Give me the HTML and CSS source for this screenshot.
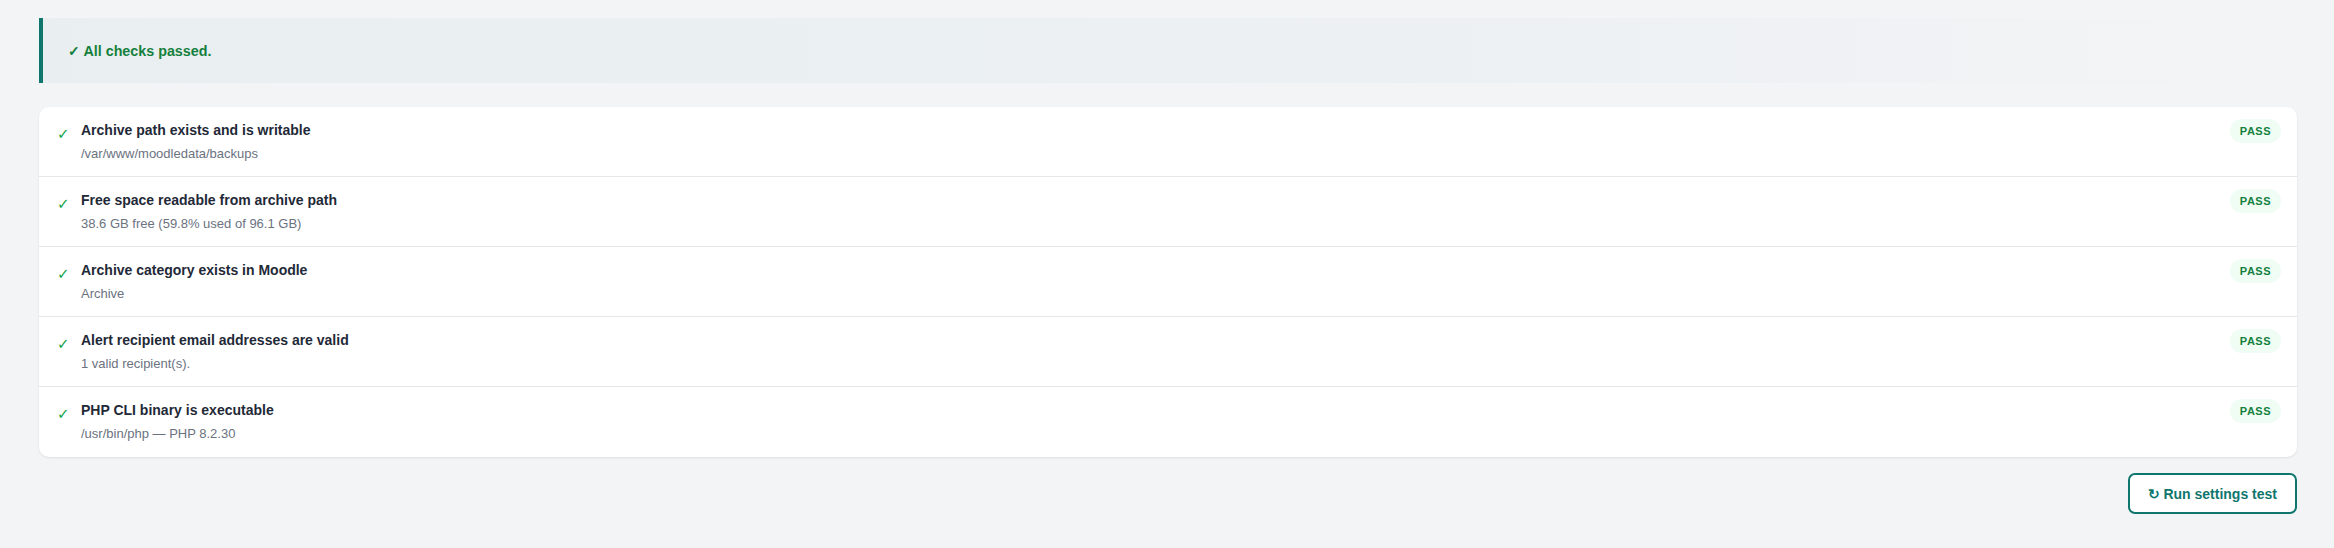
FILE: index.html
```html
<!DOCTYPE html>
<html>
<head>
<meta charset="utf-8">
<link rel="stylesheet" href="styles.css">
</head>
<body>
<div class="page">
  <div class="alert">✓ All checks passed.</div>
  <div class="card">
    <div class="row">
      <span class="tick">✓</span>
      <div class="info">
        <div class="title">Archive path exists and is writable</div>
        <div class="detail">/var/www/moodledata/backups</div>
      </div>
      <span class="badge">PASS</span>
    </div>
    <div class="row">
      <span class="tick">✓</span>
      <div class="info">
        <div class="title">Free space readable from archive path</div>
        <div class="detail">38.6 GB free (59.8% used of 96.1 GB)</div>
      </div>
      <span class="badge">PASS</span>
    </div>
    <div class="row">
      <span class="tick">✓</span>
      <div class="info">
        <div class="title">Archive category exists in Moodle</div>
        <div class="detail">Archive</div>
      </div>
      <span class="badge">PASS</span>
    </div>
    <div class="row">
      <span class="tick">✓</span>
      <div class="info">
        <div class="title">Alert recipient email addresses are valid</div>
        <div class="detail">1 valid recipient(s).</div>
      </div>
      <span class="badge">PASS</span>
    </div>
    <div class="row">
      <span class="tick">✓</span>
      <div class="info">
        <div class="title">PHP CLI binary is executable</div>
        <div class="detail">/usr/bin/php — PHP 8.2.30</div>
      </div>
      <span class="badge">PASS</span>
    </div>
  </div>
  <div class="actions">
    <button class="btn">↻ Run settings test</button>
  </div>
</div>
</body>
</html>
```
FILE: styles.css
```css
html, body {
  margin: 0;
  padding: 0;
  background: #f3f4f6;
  font-family: "Liberation Sans", Arial, sans-serif;
}
.page {
  padding: 18px 37px 20px 39px;
}
.alert {
  height: 65px;
  box-sizing: border-box;
  display: flex;
  align-items: center;
  padding: 0 25px;
  border-left: 4px solid #0f766e;
  background: linear-gradient(90deg, #e9eff0 0%, #ecf0f2 60%, rgba(243,244,246,0) 100%);
  color: #15803d;
  font-weight: 700;
  font-size: 14.3px;
}
.card {
  margin-top: 24px;
  background: #fff;
  border-radius: 10px;
  box-shadow: 0 1px 3px rgba(0,0,0,0.06), 0 1px 2px rgba(0,0,0,0.03);
  overflow: hidden;
}
.row {
  display: flex;
  align-items: flex-start;
  padding: 13px 16px 0 18px;
  height: 70px;
  box-sizing: border-box;
  border-bottom: 1px solid #e5e7eb;
}
.row:last-child {
  border-bottom: none;
}
.tick {
  width: 12px;
  margin-right: 12px;
  margin-top: 4px;
  color: #16a34a;
  font-family: "DejaVu Sans", sans-serif;
  font-size: 15px;
  line-height: 20px;
}
.info {
  flex: 1;
}
.title {
  font-size: 14px;
  font-weight: 700;
  color: #1f2937;
  line-height: 20px;
}
.detail {
  margin-top: 5px;
  font-size: 13px;
  color: #6b7280;
  line-height: 18px;
}
.badge {
  margin-top: -1px;
  height: 24px;
  line-height: 24px;
  padding: 0 10px;
  border-radius: 12px;
  background: #f0fdf4;
  color: #15803d;
  font-weight: 700;
  font-size: 11px;
  letter-spacing: 0.5px;
}
.actions {
  display: flex;
  justify-content: flex-end;
  margin-top: 16px;
}
.btn {
  height: 41px;
  padding: 0 18px;
  border: 2px solid #0f766e;
  border-radius: 7px;
  background: #fff;
  color: #0f766e;
  font-family: "Liberation Sans", Arial, sans-serif;
  font-weight: 700;
  font-size: 14px;
}
```
